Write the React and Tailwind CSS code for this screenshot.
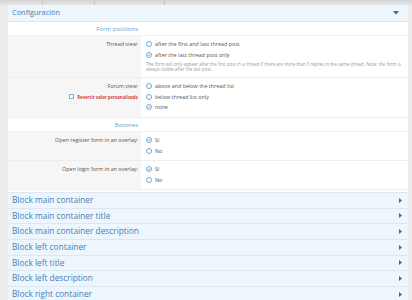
const Radio = ({ checked, label }) => (
  <div className="flex items-center h-[10.5px]">
    <span className="w-[6px] h-[6px] rounded-full border border-[#72aadb] bg-white flex items-center justify-center mr-[3px] shrink-0">
      {checked && (
        <svg width="4" height="4" viewBox="0 0 4 4">
          <path d="M0.6 2 L1.6 3 L3.4 1" fill="none" stroke="#5b97cc" strokeWidth="0.8" />
        </svg>
      )}
    </span>
    <span className="text-[5.4px] text-[#555]">{label}</span>
  </div>
);

const Heading = ({ children }) => (
  <div className="flex h-[14px] border-b border-[#eef1f4] bg-white">
    <div className="w-[133px] text-right pr-[3px] text-[6px] leading-[14px] text-[#5d9fd6]">{children}</div>
    <div className="flex-1" />
  </div>
);

const Row = ({ label, h, extra, children }) => (
  <div className="flex border-b border-[#eceff2]" style={{ height: h }}>
    <div className="w-[133px] bg-[#f6f6f6] text-right pr-[3px] pt-[3px] text-[5.4px] text-[#555] leading-[10.5px]">
      <div>{label}</div>
      {extra}
    </div>
    <div className="flex-1 bg-white pl-[5px] pt-[3px]">{children}</div>
  </div>
);

const blocks = [
  "Block main container",
  "Block main container title",
  "Block main container description",
  "Block left container",
  "Block left title",
  "Block left description",
  "Block right container",
];

export default function App() {
  return (
    <div className="w-[412px] h-[300px] overflow-hidden bg-[#ececec] font-['Open_Sans',sans-serif]">
      <div className="h-[5px] bg-gradient-to-b from-[#d4d4d4] to-[#e6e6e6] flex">
        <div className="w-[43px] border-r border-[#c8c8c8]" />
        <div className="w-[52px] border-r border-[#c8c8c8]" />
        <div className="w-[70px] border-r border-[#c8c8c8]" />
        <div className="flex-1" />
      </div>
      <div className="flex">
        <div className="w-[8px] shrink-0" />
        <div className="w-[400px] shrink-0 bg-white">
          <div className="h-[17px] bg-[#edf5fd] border-b border-[#dbe7f3] flex items-center justify-between px-[4px]">
            <span className="text-[7.4px] text-[#3f7db7]">Configuración</span>
            <svg width="6" height="4" viewBox="0 0 6 4" className="mr-[5px]">
              <path d="M0 0 L6 0 L3 3.5 Z" fill="#2f6ca8" />
            </svg>
          </div>
          <Heading>Form positions</Heading>
          <Row label="Thread view:" h="42px">
            <Radio label="after the first and last thread post" />
            <Radio checked label="after the last thread post only" />
            <div className="text-[4.4px] text-[#999] leading-[5.5px] pr-[3px] mt-[1.5px]">
              The form will only appear after the first post in a thread if there are more than 3 replies in the same thread. Note: the form is always visible after the last post.
            </div>
          </Row>
          <Row
            label="Forum view:"
            h="40px"
            extra={
              <div className="flex items-center justify-end">
                <span className="w-[5px] h-[5px] border border-[#7fb2dd] bg-white mr-[3px]" />
                <span className="text-[4.3px] font-bold text-[#d8413c]">Revertir valor personalizado</span>
              </div>
            }
          >
            <Radio label="above and below the thread list" />
            <Radio label="below thread list only" />
            <Radio checked label="none" />
          </Row>
          <Heading>Botones</Heading>
          <Row label="Open register form in an overlay:" h="29px">
            <Radio checked label="Sí" />
            <Radio label="No" />
          </Row>
          <Row label="Open login form in an overlay:" h="29px">
            <Radio checked label="Sí" />
            <Radio label="No" />
          </Row>
          <div className="h-[2px] bg-white" />
          {blocks.map((b) => (
            <div
              key={b}
              className="h-[15.67px] bg-[#edf5fd] border-t border-[#dce7f2] flex items-center justify-between pl-[4px] pr-[6px]"
            >
              <span className="text-[8.3px] text-[#4b80b4]">{b}</span>
              <svg width="3" height="5" viewBox="0 0 3 5">
                <path d="M0 0 L3 2.5 L0 5 Z" fill="#2f6ca8" />
              </svg>
            </div>
          ))}
        </div>
      </div>
    </div>
  );
}
